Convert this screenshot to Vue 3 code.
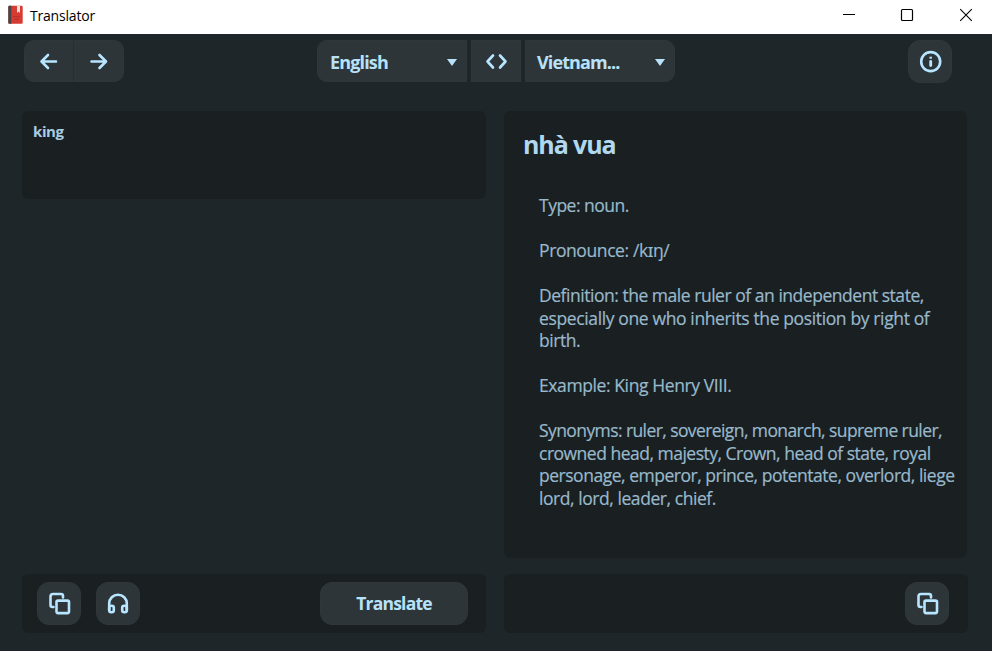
<script setup>
const entries = [
  { lines: [['Type: noun.', -0.5]] },
  { lines: [['Pronounce: /kɪŋ/', -0.4]] },
  {
    lines: [
      ['Definition: the male ruler of an independent state,', -0.47],
      ['especially one who inherits the position by right of', -0.37],
      ['birth.', -0.45],
    ],
  },
  { lines: [['Example: King Henry VIII.', -0.4]] },
  {
    lines: [
      ['Synonyms: ruler, sovereign, monarch, supreme ruler,', -0.59],
      ['crowned head, majesty, Crown, head of state, royal', -0.5],
      ['personage, emperor, prince, potentate, overlord, liege', -0.48],
      ['lord, lord, leader, chief.', -0.44],
    ],
  },
]
</script>

<template>
  <div class="window">
    <header class="titlebar">
      <svg class="book" width="16" height="20" viewBox="0 0 16 20">
        <rect x="0.3" y="0.8" width="14.400" height="18" rx="1.2" fill="#d83b32" />
        <path d="M1.3.8H3.3V18.800H1.3a1 1 0 0 1-1-1V1.800a1 1 0 0 1 1-1z" fill="#42474a" />
        <path d="M9 .8h3v7.200l-1.500-1.500L9 8z" fill="#eee3e1" />
        <path d="M5 11.500h7M6 14h5" stroke="#b52d28" stroke-width="0.8" />
      </svg>
      <span class="app-name">Translator</span>
      <div class="controls">
        <svg width="58" height="34" viewBox="0 0 58 34"><path d="M23 14.500h12" stroke="#000" /></svg>
        <svg width="58" height="34" viewBox="0 0 58 34"><rect x="23.500" y="9.500" width="11" height="11" rx="1" fill="none" stroke="#000" stroke-width="1.200" /></svg>
        <svg width="58" height="34" viewBox="0 0 58 34"><path d="M24.200 9.200l11.600 11.600M35.800 9.200l-11.600 11.600" stroke="#000" stroke-width="1.100" /></svg>
      </div>
    </header>

    <nav class="toolbar">
      <div class="history">
        <button class="btn back"><svg width="24" height="24" viewBox="0 0 24 24"><path d="M19 12.500H5M11 6l-6.500 6.500L11 19" /></svg></button>
        <button class="btn forward"><svg width="24" height="24" viewBox="0 0 24 24"><path d="M4.500 12.500h14M12.500 6l6.500 6.500L12.500 19" /></svg></button>
      </div>
      <div class="languages">
        <button class="btn select source"><span class="english">English</span><i class="caret"></i></button>
        <button class="btn swap"><svg width="26" height="24" viewBox="0 0 26 24"><path d="M10 6.500L4.500 12.500l5.500 6M17 6.500l5.500 6-5.500 6" /></svg></button>
        <button class="btn select target"><span class="vietnam">Vietnam...</span><i class="caret"></i></button>
      </div>
      <button class="btn square info">
        <svg width="24" height="24" viewBox="0 0 24 24"><circle cx="12.700" cy="11.600" r="9.500" /><path d="M12.700 11.500v4" stroke-width="2.800" /><path d="M12.700 6.700v2" stroke-width="2.500" stroke-linecap="butt" /></svg>
      </button>
    </nav>

    <main class="panes">
      <section class="column">
        <div class="panel input">king</div>
        <div class="panel actions">
          <button class="btn square"><svg width="24" height="24" viewBox="0 0 24 24"><path d="M16 5.500V4a2 2 0 0 0-2-2H6a2.500 2.500 0 0 0-2.500 2.500V13a2 2 0 0 0 2 2h1" /><rect x="9.500" y="8.600" width="12.500" height="12.500" rx="1.500" /></svg></button>
          <button class="btn square"><svg width="24" height="24" viewBox="0 0 24 24"><path d="M3.200 18V11.500a8.800 8.800 0 0 1 17.600 0V18" /><rect x="3.200" y="13.700" width="4.600" height="6.600" rx="2" /><rect x="16.200" y="13.700" width="4.600" height="6.600" rx="2" /></svg></button>
          <button class="btn translate">Translate</button>
        </div>
      </section>
      <section class="column">
        <article class="panel output">
          <h1>nhà vua</h1>
          <div class="details">
            <p v-for="(entry, i) in entries" :key="i">
              <span v-for="(line, j) in entry.lines" :key="j" class="line" :style="{ letterSpacing: line[1] + 'px' }">{{ line[0] }}</span>
            </p>
          </div>
        </article>
        <div class="panel actions end">
          <button class="btn square"><svg width="24" height="24" viewBox="0 0 24 24"><path d="M16 5.500V4a2 2 0 0 0-2-2H6a2.500 2.500 0 0 0-2.500 2.500V13a2 2 0 0 0 2 2h1" /><rect x="9.500" y="8.600" width="12.500" height="12.500" rx="1.500" /></svg></button>
        </div>
      </section>
    </main>
  </div>
</template>

<style>
body { margin: 0; overflow: hidden; }
</style>

<style scoped>
* { box-sizing: border-box; }
.window { width: 992px; height: 651px; background: #1f2629; display: flex; flex-direction: column; font-family: "Open Sans", "Noto Sans", sans-serif; color: #b8e2fa; }
.titlebar { height: 34px; background: #fff; display: flex; align-items: flex-start; padding-left: 8px; color: #000; }
.book { margin-top: 5px; }
.app-name { margin: 5px 0 0 6px; font-size: 14px; line-height: 21px; letter-spacing: -0.2px; }
.controls { display: flex; margin-left: auto; margin-right: -2px; }
.controls svg { display: block; }
.toolbar { height: 77px; padding: 6px 40px 0 24px; display: flex; align-items: flex-start; }
.history { display: flex; }
.btn { border: 1px solid #2f373b; background: #2d3539; color: #b8e2fa; font-family: inherit; font-weight: 700; font-size: 18px; padding: 0; margin: 0; display: flex; align-items: center; justify-content: center; }
.btn svg { fill: none; stroke: #b8e5ff; stroke-width: 2.6; stroke-linecap: round; stroke-linejoin: round; display: block; }
.back, .forward { width: 50px; height: 42px; }
.back { border-radius: 10px 0 0 10px; border-right-color: #293034; }
.forward { border-radius: 0 10px 10px 0; border-left: 0; }
.languages { display: flex; gap: 4px; margin-left: 193px; }
.select { width: 150px; height: 42px; justify-content: space-between; padding: 1px 9px 0 12px; }
.source { border-radius: 10px 0 0 10px; }
.target { border-radius: 0 10px 10px 0; padding-left: 11px; }
.swap { width: 50px; height: 42px; }
.caret { border: 5px solid transparent; border-top: 7px solid #b8e2fa; border-bottom: 0; margin-top: 1px; }
.square { width: 44px; height: 43px; border-radius: 12px; }
.info { margin-left: auto; }
.english { letter-spacing: -0.85px; }
.vietnam { letter-spacing: -0.9px; }
.panes { display: flex; gap: 18px; padding: 0 24px 0 22px; height: 522px; }
.column { width: 464px; height: 522px; display: flex; flex-direction: column; justify-content: space-between; }
.panel { background: #1a1f22; border-radius: 6px; }
.input { height: 88px; padding: 10px 11px; font-size: 15px; line-height: 21px; font-weight: 700; letter-spacing: -0.4px; color: #a9cee3; }
.actions { height: 59px; display: flex; gap: 15px; padding: 8px 18px 8px 15px; }
.end { justify-content: flex-end; padding-right: 19px; }
.translate { width: 148px; height: 43px; border-radius: 12px; margin-left: auto; font-size: 17.5px; letter-spacing: -0.8px; padding-bottom: 1px; }
.output { width: 463px; height: 447px; padding: 15px 0 0 19px; }
h1 { font-size: 25px; line-height: 36px; font-weight: 700; margin: 0; letter-spacing: -1.1px; color: #b0d8ef; }
.details { padding: 32.4px 0 0 16px; color: #98b9cb; font-size: 17.5px; line-height: 22.45px; -webkit-text-stroke: 0.2px #98b9cb; }
p { margin: 0 0 22.55px; }
.line { display: block; white-space: nowrap; }
</style>
